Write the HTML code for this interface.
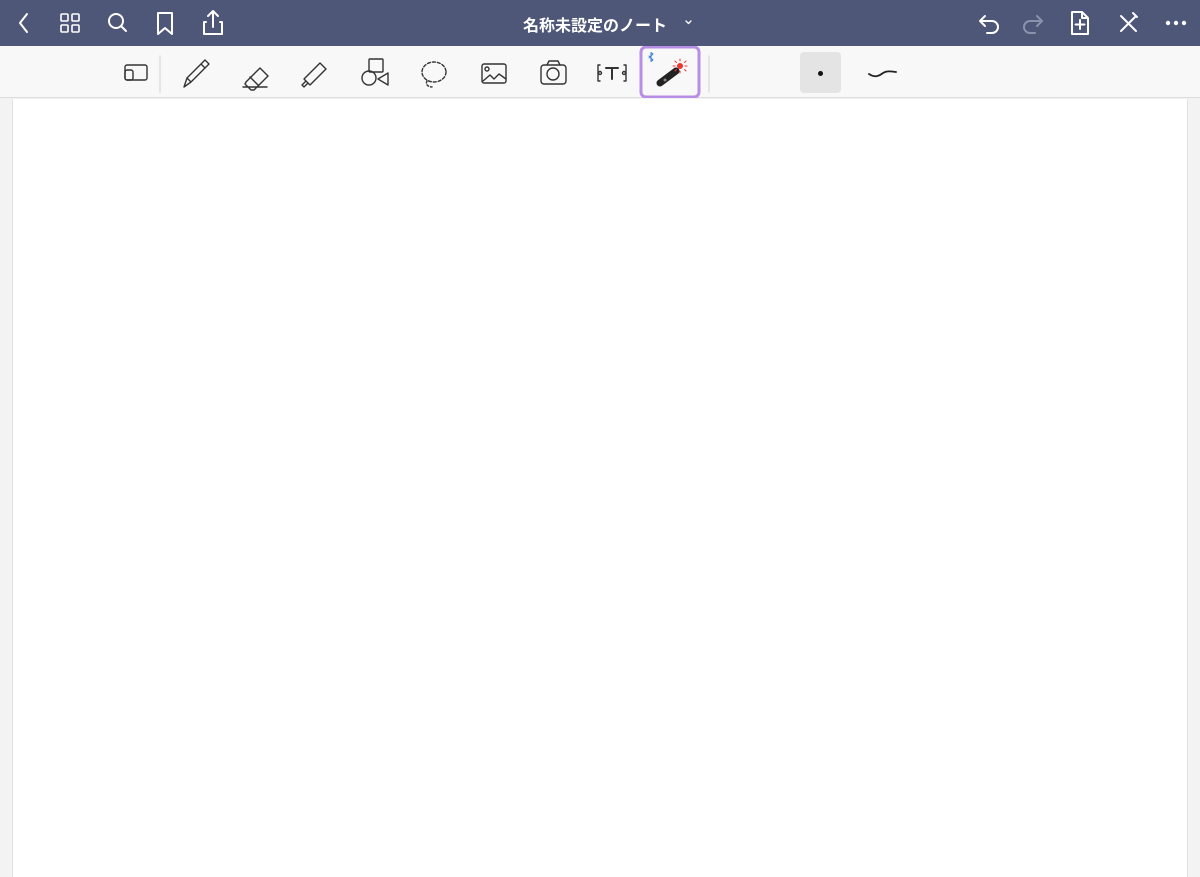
<!DOCTYPE html>
<html><head><meta charset="utf-8"><style>
*{margin:0;padding:0;box-sizing:border-box}
body{width:1200px;height:877px;overflow:hidden;background:#f3f3f3;font-family:"Liberation Sans","Noto Sans CJK JP",sans-serif;position:relative}
#hdr{position:absolute;left:0;top:0;width:1200px;height:46px;background:#4f5778}
#title{position:absolute;left:523px;top:12px;color:#fff;font-size:16px;font-weight:bold;white-space:nowrap}
#tb{position:absolute;left:0;top:46px;width:1200px;height:52px;background:#f8f8f8;border-bottom:1px solid #ddd}
#page{position:absolute;left:12px;top:99px;width:1176px;height:778px;background:#fff;border-left:1px solid #e2e2e2;border-right:1px solid #e2e2e2}
svg{position:absolute}
</style></head><body>
<div id="hdr">
<svg style="left:0;top:0" width="1200" height="46" fill="none" stroke="#fff" stroke-width="2" stroke-linecap="round" stroke-linejoin="round">
<path d="M27 14l-7 9 7 9"/>
<rect x="61" y="14" width="7" height="7" rx="1" stroke-width="1.6"/><rect x="72" y="14" width="7" height="7" rx="1" stroke-width="1.6"/><rect x="61" y="25" width="7" height="7" rx="1" stroke-width="1.6"/><rect x="72" y="25" width="7" height="7" rx="1" stroke-width="1.6"/>
<circle cx="116" cy="21" r="7"/><path d="M121 26l5 5"/>
<path d="M158 13h14v21l-7-6-7 6z"/>
<path d="M206 22h-2v12h18v-12h-2M213 27v-15M208 16l5-5 5 5"/>
<path d="M686 21l2.5 2.5 2.5-2.5" stroke-width="1.3"/>
<path d="M980 21h12a6 6 0 010 12h-5M985 16l-5 5 5 5"/>
<g stroke="#8a93ad"><path d="M1042 21h-12a6 6 0 000 12h5M1037 16l5 5-5 5"/></g>
<path d="M1072 12h10l6 6v16h-16zM1082 12v6h6M1080 20v9M1075.5 24.5h9"/>
<path d="M1121 16l15 15M1136 16l-15 15M1133 13l4 4"/>
</svg>
<div id="title">名称未設定のノート</div>
<svg style="left:1165px;top:19px" width="24" height="8"><circle cx="3" cy="4" r="2.2" fill="#fff"/><circle cx="11" cy="4" r="2.2" fill="#fff"/><circle cx="19" cy="4" r="2.2" fill="#fff"/></svg>
</div>
<div id="tb">
<svg style="left:0;top:0" width="1200" height="52" fill="none" stroke="#333" stroke-width="1.4" stroke-linecap="round" stroke-linejoin="round">
<rect x="125" y="19" width="22" height="15" rx="2"/><rect x="125" y="24" width="8" height="10" rx="2"/>
<path d="M160 10v36" stroke="#ddd"/>
<path d="M184 41l3-9 18-18 4 4-18 18zM201 18l4 4M187 32l4 4"/>
<path d="M243 41h24M246 36l14-14 8 8-14 14h-3l-6-6zM250 31l8 8"/>
<path d="M302 39l4-4-2-2 16-16 6 6-16 16-2-2-4 4zM306 35l4 4"/>
<rect x="369" y="13" width="14" height="13" rx="1"/><circle cx="369" cy="32" r="7"/><path d="M388 27l-10 6 10 6z"/>
<ellipse cx="434" cy="26" rx="12" ry="10" stroke-dasharray="3 2"/><path d="M427 35c-2 4 2 6 5 6" stroke-dasharray="2 2"/>
<rect x="482" y="18" width="24" height="19" rx="2"/><circle cx="487" cy="23" r="2"/><path d="M483 35l7-6 4 4 5-5 7 5"/>
<rect x="541" y="19" width="25" height="19" rx="3"/><path d="M547 19l2-4h9l2 4"/><circle cx="553" cy="28" r="6"/>
<path d="M600 19h-2v16h2M624 19h2v16h-2"/><path d="M606 22h12M612 22v11" stroke-width="2"/><circle cx="600" cy="27" r="1.5"/><circle cx="624" cy="27" r="1.5"/>
<rect x="641" y="1" width="58" height="50" rx="5" stroke="#b78ee6" stroke-width="3"/>
<path d="M649 10l4 4-2 1.5v-9l2 1.5-4 4" stroke="#3a7bd5" stroke-width="1"/>
<path d="M660 37l16-12" stroke="#222" stroke-width="7"/><circle cx="665" cy="34" r="1.5" fill="#888" stroke="none"/>
<circle cx="680" cy="20" r="3" fill="#e33" stroke="none"/><path d="M680 13v2M680 25v2M673 20h2M685 20h2M675 15l1.5 1.5M684.5 23.5l1.5 1.5M675 25l1.5-1.5M684.5 16.5l1.5-1.5" stroke="#e33" stroke-width="1"/>
<path d="M709 10v36" stroke="#ddd"/>
<path d="M869 28c6 4 10 2 14-1 3-2 6-2 13-1" stroke="#222" stroke-width="1.8"/>
</svg>
<div style="position:absolute;left:800px;top:6px;width:41px;height:41px;background:#e4e4e4;border-radius:4px"></div>
<div style="position:absolute;left:818px;top:25px;width:5px;height:5px;border-radius:50%;background:#111"></div>
</div>
<div id="page"></div>
</body></html>
